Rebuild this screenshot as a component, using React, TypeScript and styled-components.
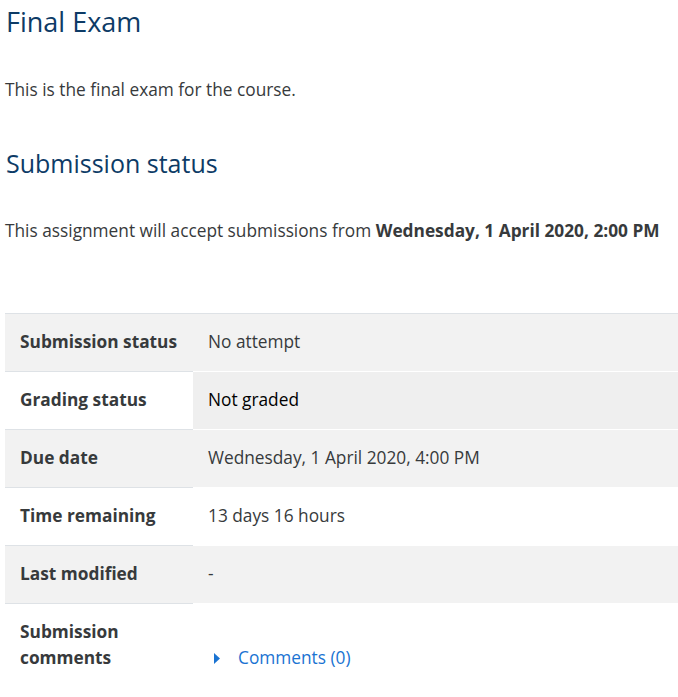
import React from "react";
import styled, { createGlobalStyle } from "styled-components";

const Global = createGlobalStyle`
  html, body { margin: 0; padding: 0; background: #fff; }
  body { font-family: "Open Sans", "Noto Sans", sans-serif; color: #373a3c; }
`;

const Page = styled.div`
  padding: 0 0 0 5px;
  display: flex;
  flex-direction: column;
`;

const Title = styled.h2`
  margin: 6px 0 0 1px;
  font-size: 27px;
  font-weight: 400;
  line-height: 32px;
  color: #0d3b66;
`;

const Para = styled.p<{ $top: number }>`
  margin: ${(p) => p.$top}px 0 0 0;
  font-size: 17.3px;
  line-height: 24px;
  color: #373a3c;
  b { font-weight: 700; color: #373a3c; }
`;

const Heading = styled.h3`
  margin: 46px 0 0 1px;
  font-size: 25px;
  font-weight: 400;
  line-height: 30px;
  color: #0d3b66;
`;

const Table = styled.table`
  margin-top: 70px;
  width: 673px;
  border-collapse: collapse;
  font-size: 17.3px;
`;

const Row = styled.tr<{ $striped: boolean }>`
  background: ${(p) => (p.$striped ? "#f2f2f2" : "#fff")};
  &:first-child th, &:first-child td { border-top-color: #dee2e6; }
`;

const Label = styled.th`
  width: 188px;
  box-sizing: border-box;
  text-align: left;
  vertical-align: top;
  padding: 15px 15px 16px 15px;
  line-height: 26px;
  font-weight: 700;
  color: #373a3c;
  border-top: 1px solid #dee2e6;
`;

const Value = styled.td<{ $align?: string; $bg?: string; $dark?: boolean }>`
  text-align: left;
  vertical-align: ${(p) => p.$align || "top"};
  padding: 15px 15px 16px 15px;
  line-height: 26px;
  color: ${(p) => (p.$dark ? "#000" : "#373a3c")};
  background: ${(p) => p.$bg || "transparent"};
  border-top: 1px solid #fff;
`;

const CommentLink = styled.a`
  display: inline-flex;
  align-items: center;
  gap: 18px;
  padding-left: 6px;
  color: #1a73d2;
  text-decoration: none;
  cursor: pointer;
`;

const Caret = () => (
  <svg width="6" height="11" viewBox="0 0 6 11" aria-hidden="true">
    <path d="M0 0 L6 5.5 L0 11 Z" fill="#1a73d2" />
  </svg>
);

const rows: { label: React.ReactNode; value: React.ReactNode; striped: boolean; bg?: string; dark?: boolean; align?: string }[] = [
  { label: "Submission status", value: "No attempt", striped: true },
  { label: "Grading status", value: "Not graded", striped: false, bg: "#efefef", dark: true },
  { label: "Due date", value: "Wednesday, 1 April 2020, 4:00 PM", striped: true },
  { label: "Time remaining", value: "13 days 16 hours", striped: false },
  { label: "Last modified", value: "-", striped: true },
  {
    label: (
      <>
        Submission
        <br />
        comments
      </>
    ),
    value: (
      <CommentLink>
        <Caret />
        Comments (0)
      </CommentLink>
    ),
    striped: false,
    align: "bottom",
  },
];

export default function App() {
  return (
    <Page>
      <Global />
      <Title>Final Exam</Title>
      <Para $top={40}>This is the final exam for the course.</Para>
      <Heading>Submission status</Heading>
      <Para $top={41}>
        This assignment will accept submissions from <b>Wednesday, 1 April 2020, 2:00 PM</b>
      </Para>
      <Table>
        <tbody>
          {rows.map((r, i) => (
            <Row key={i} $striped={r.striped}>
              <Label>{r.label}</Label>
              <Value $bg={r.bg} $dark={r.dark} $align={r.align}>
                {r.value}
              </Value>
            </Row>
          ))}
        </tbody>
      </Table>
    </Page>
  );
}
